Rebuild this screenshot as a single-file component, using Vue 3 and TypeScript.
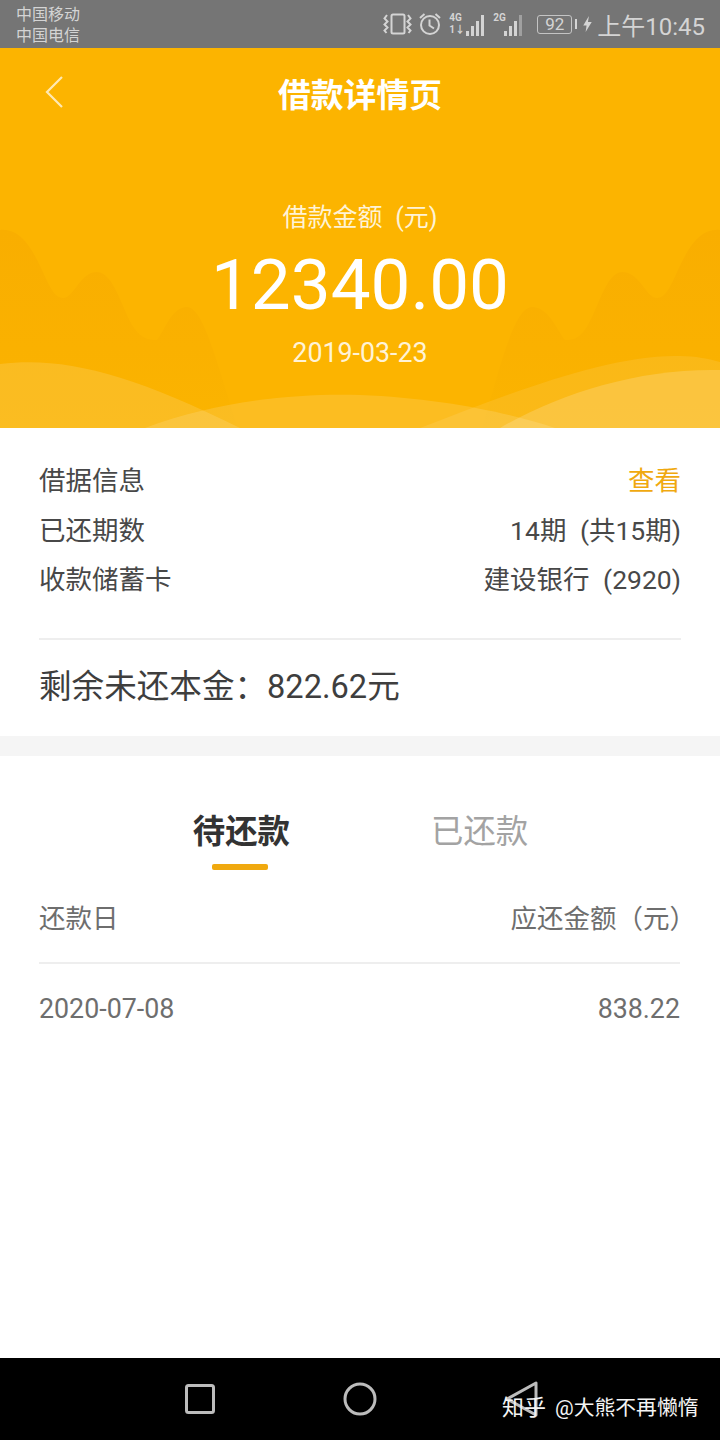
<script setup lang="ts">
const infoRows = [
  { label: '借据信息', value: '查看', link: true },
  { label: '已还期数', value: '14期\u2002(共15期)', link: false },
  { label: '收款储蓄卡', value: '建设银行\u2002(2920)', link: false },
];
</script>

<template>
  <div class="page">
    <div class="status">
      <div class="carriers">
        <span>中国移动</span>
        <span>中国电信</span>
      </div>
      <div class="status-right">
        <svg class="vibrate" width="29" height="24" viewBox="0 0 29 24" fill="none" stroke="#d4d4d4">
          <rect x="8.500" y="2.500" width="13" height="19" rx="1.500" stroke-width="2" />
          <path d="M4 3L1.500 6.500l3 3-3 3 3 3-3 3 2 2.500M25 3l2.500 3.500-3 3 3 3-3 3 3 3-2 2.500" stroke-width="2" />
        </svg>
        <svg class="alarm" width="22" height="24" viewBox="0 0 22 24" fill="none" stroke="#d4d4d4">
          <circle cx="11" cy="13" r="9" stroke-width="2" />
          <path d="M10.500 7.500v6l4.500 3" stroke-width="2" />
          <path d="M1 6l4.500-4M21 6l-4.500-4" stroke-width="2" />
        </svg>
        <div class="signal first">
          <div class="net-labels wide">
            <span>4G</span>
            <span>1↓</span>
          </div>
          <div class="bars">
            <i style="height: 5px"></i><i style="height: 10px"></i><i style="height: 15px"></i><i style="height: 21px"></i>
          </div>
        </div>
        <div class="signal second">
          <div class="net-labels"><span>2G</span><span>&nbsp;</span></div>
          <div class="bars dim">
            <i style="height: 5px"></i><i style="height: 10px"></i><i style="height: 15px"></i><i style="height: 21px"></i>
          </div>
        </div>
        <div class="battery"><span>92</span></div>
        <div class="battery-tip"></div>
        <svg class="bolt" width="9" height="16" viewBox="0 0 9 17"><path d="M6 0L0 10h3.500L2.500 17 9 6.500H5z" fill="#d4d4d4" /></svg>
        <span class="clock">上午10:45</span>
      </div>
    </div>

    <div class="hero">
      <svg class="hills" width="720" height="380" viewBox="0 0 720 380" preserveAspectRatio="none">
        <defs>
          <linearGradient id="hillFade" x1="0" y1="0" x2="0" y2="1">
            <stop offset="0" stop-color="#f9ae00" />
            <stop offset="0.6" stop-color="#fab100" />
            <stop offset="1" stop-color="#fbb400" />
          </linearGradient>
        </defs>
        <path d="M0 182C20 180 32 200 42 222 50 240 55 250 63 250 74 250 80 224 97 224 114 224 122 262 134 280 143 292 150 292 157 292 166 280 172 259 187 259 204 259 218 320 238 380H0z" fill="url(#hillFade)" />
        <path d="M720 182C700 180 688 200 678 222 670 240 665 250 657 250 646 250 640 224 622 224 606 224 598 262 586 280 578 292 572 292 565 292 556 280 548 259 532 259 514 259 500 320 482 380H720z" fill="url(#hillFade)" />
        <path d="M0 316C62 308 130 325 240 380H0z" fill="#fff" fill-opacity="0.13" />
        <path d="M145 380C220 352 300 345 360 347 440 350 510 365 555 380z" fill="#fff" fill-opacity="0.13" />
        <path d="M420 380C510 345 610 306 680 308 695 308 710 311 720 314V380z" fill="#fff" fill-opacity="0.09" />
        <path d="M500 380C560 345 640 320 720 322V380z" fill="#fff" fill-opacity="0.17" />
      </svg>
      <div class="nav">
        <svg class="back" width="20" height="34" viewBox="0 0 20 34" fill="none" stroke="#ffe9b3" stroke-width="2.200">
          <path d="M17 2L2 17l15 15" />
        </svg>
        <h1 class="title">借款详情页</h1>
      </div>
      <div class="hero-body">
        <div class="hero-label">借款金额&ensp;(元)</div>
        <div class="amount">12340.00</div>
        <div class="hero-date">2019-03-23</div>
      </div>
    </div>

    <section class="info">
      <div v-for="row in infoRows" :key="row.label" class="info-row">
        <span>{{ row.label }}</span>
        <span :class="{ link: row.link }">{{ row.value }}</span>
      </div>
      <div class="rule"></div>
      <div class="remain">剩余未还本金：822.62元</div>
    </section>

    <div class="spacer"></div>

    <section class="plan">
      <div class="tabs">
        <div class="tab active">待还款</div>
        <div class="tab">已还款</div>
      </div>
      <div class="table-head">
        <span>还款日</span>
        <span class="head-amount">应还金额（元）</span>
      </div>
      <div class="table-row">
        <span>2020-07-08</span>
        <span>838.22</span>
      </div>
    </section>

    <div class="navbar">
      <svg width="30" height="30" viewBox="0 0 30 30" fill="none" stroke="#bcbcbc" stroke-width="3">
        <rect x="1.500" y="1.500" width="27" height="27" rx="2" />
      </svg>
      <svg width="34" height="34" viewBox="0 0 34 34" fill="none" stroke="#bcbcbc" stroke-width="3">
        <circle cx="17" cy="17" r="15" />
      </svg>
      <svg width="34" height="36" viewBox="0 0 34 36" fill="none" stroke="#bcbcbc" stroke-width="3" stroke-linejoin="round">
        <path d="M31 2v32L2 18z" />
      </svg>
      <div class="watermark"><span class="zhihu">知乎</span><span class="author">@大熊不再懒惰</span></div>
    </div>
  </div>
</template>

<style>
html,
body {
  margin: 0;
  background: #fff;
}
</style>

<style scoped>
.page {
  width: 720px;
  height: 1440px;
  display: flex;
  flex-direction: column;
  overflow: hidden;
  position: relative;
  font-family: Roboto, "Noto Sans CJK SC", sans-serif;
  background: #fff;
}

.status {
  height: 48px;
  flex: none;
  background: #757575;
  display: flex;
  justify-content: space-between;
  align-items: center;
  padding: 0 15px 0 16px;
  color: #d4d4d4;
}

.carriers {
  display: flex;
  flex-direction: column;
  font-size: 16px;
  line-height: 21px;
  margin-top: 1px;
}

.status-right {
  display: flex;
  align-items: center;
}

.vibrate {
  flex: none;
}

.alarm {
  flex: none;
  margin-left: 7px;
}

.signal {
  display: flex;
  align-items: flex-end;
  height: 24px;
  margin-top: -1px;
}

.signal.first {
  margin-left: 8px;
}

.signal.second {
  margin-left: 9px;
}

.net-labels {
  display: flex;
  flex-direction: column;
  width: 11px;
  font-size: 10px;
  font-weight: 700;
  line-height: 12px;
  white-space: nowrap;
}

.net-labels.wide {
  width: 17px;
}

.bars {
  display: flex;
  align-items: flex-end;
  gap: 2px;
}

.bars i {
  display: block;
  width: 3px;
  background: #d4d4d4;
}

.bars.dim i:last-child {
  background: #a0a0a0;
}

.battery {
  width: 35px;
  height: 19px;
  border: 1.500px solid #c4c4c4;
  border-radius: 3px;
  margin-left: 15px;
  display: flex;
  align-items: center;
  justify-content: center;
  font-size: 17px;
  box-sizing: border-box;
}

.battery-tip {
  width: 2px;
  height: 10px;
  margin-left: 3px;
  background: #d4d4d4;
}

.bolt {
  margin-left: 6px;
}

.clock {
  font-size: 24px;
  margin-left: 5px;
}

.hero {
  height: 380px;
  flex: none;
  background: #fcb400;
  position: relative;
  color: #fff;
}

.hills {
  position: absolute;
  left: 0;
  top: 0;
}

.nav {
  position: relative;
  height: 88px;
  display: flex;
  align-items: center;
  justify-content: center;
}

.back {
  position: absolute;
  left: 45px;
  top: 27px;
}

.title {
  margin: 0;
  font-size: 32.800px;
  font-weight: 700;
}

.hero-body {
  position: relative;
  display: flex;
  flex-direction: column;
  align-items: center;
  padding-top: 64px;
}

.hero-label {
  font-size: 25px;
  line-height: 36px;
  color: #fff3d6;
}

.amount {
  font-size: 71px;
  line-height: 82px;
  margin-top: 8px;
}

.hero-date {
  font-size: 26.800px;
  line-height: 36px;
  margin-top: 9px;
  color: #fff3d6;
}

.info {
  height: 308px;
  flex: none;
  box-sizing: border-box;
  padding: 28px 39px 0;
  color: #484848;
  font-size: 26.500px;
}

.info-row {
  display: flex;
  justify-content: space-between;
  line-height: 49.500px;
  height: 49.500px;
}

.link {
  color: #f0a90f;
}

.rule {
  height: 2px;
  margin-top: 33px;
  background: #eeeeee;
}

.remain {
  margin-top: 24px;
  font-size: 32.600px;
  line-height: 46px;
  color: #3e3e3e;
}

.spacer {
  height: 20px;
  flex: none;
  background: #f5f5f5;
}

.plan {
  flex: 1;
  padding: 0 40px 0 39px;
}

.tabs {
  display: flex;
  justify-content: center;
  gap: 141px;
  padding-top: 52px;
  margin-left: 2px;
}

.tab {
  position: relative;
  font-size: 32.400px;
  line-height: 48px;
  color: #a3a3a3;
}

.tab.active {
  color: #333;
  font-weight: 700;
}

.tab.active::after {
  content: "";
  position: absolute;
  left: 19px;
  top: 56px;
  width: 56px;
  height: 6px;
  border-radius: 2px;
  background: #f0a90f;
}

.table-head {
  display: flex;
  justify-content: space-between;
  margin-top: 45px;
  height: 63px;
  line-height: 36px;
  box-sizing: border-box;
  font-size: 26.500px;
  color: #6e6e6e;
  border-bottom: 2px solid #eeeeee;
}

.head-amount {
  margin-right: -16px;
}

.table-row {
  display: flex;
  justify-content: space-between;
  margin-top: 27px;
  line-height: 36px;
  font-size: 26.800px;
  color: #6e6e6e;
}

.navbar {
  height: 82px;
  flex: none;
  background: #000;
  position: relative;
  display: flex;
  align-items: center;
  padding-left: 185px;
  gap: 128px;
}

.watermark {
  position: absolute;
  left: 502px;
  top: 34px;
  line-height: 32px;
  color: #f4f4f4;
  white-space: nowrap;
  display: flex;
  align-items: baseline;
}

.zhihu {
  font-size: 22px;
  margin-right: 9px;
}

.author {
  font-size: 20.800px;
}
</style>
